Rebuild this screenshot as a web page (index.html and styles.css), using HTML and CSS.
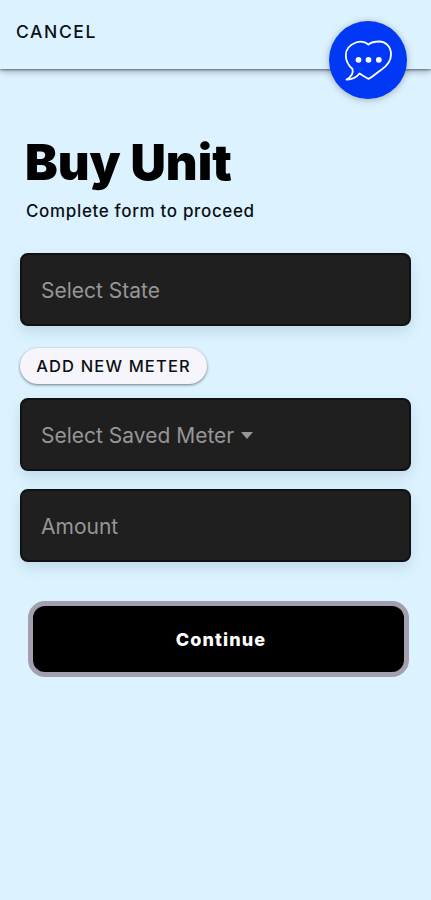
FILE: index.html
```html
<!DOCTYPE html>
<html lang="en">
  <head>
    <meta charset="UTF-8" />
    <meta name="viewport" content="width=device-width, initial-scale=1.0" />
    <title>Buy Unit</title>
    <link rel="stylesheet" href="styles.css">
  </head>
  <body>
    <header class="toolbar">
      <button class="cancel" type="button">CANCEL</button>
    </header>

    <button class="chat" type="button" aria-label="Chat">
      <svg viewBox="0 0 78 78" width="78" height="78">
        <path d="M39.500 23.500 C36 20.500 31 20 27 21.500 C20 24 16.500 29 16.800 35 C17 40 19.500 44.500 23.500 48 C24.500 52 22 56 17.500 58.500 C22 59 27.500 56.500 30.500 52.500 C33.500 54.500 36.500 56.500 39.500 57.800 C43 56.500 47 52.500 52 49 C58 45 62 40 62 33.500 C62 26 57 20.500 50 20.500 C46 20.500 42 21.500 39.500 23.500 Z" fill="none" stroke="#fff" stroke-width="1.8" stroke-linejoin="round" />
        <circle cx="29.500" cy="38.800" r="2.900" fill="#fff" />
        <circle cx="39.500" cy="38.800" r="2.900" fill="#fff" />
        <circle cx="49.800" cy="38.800" r="2.900" fill="#fff" />
      </svg>
    </button>

    <main class="container">
      <h1>Buy Unit</h1>
      <p class="subtitle">Complete form to proceed</p>

      <form>
        <div class="field">Select State</div>
        <button class="add-meter" type="button">ADD NEW METER</button>
        <div class="field">Select Saved Meter <span class="caret"></span></div>
        <div class="field">Amount</div>
        <button class="continue" type="button">Continue</button>
      </form>
    </main>
  </body>
</html>
```
FILE: styles.css
```css
* {
  box-sizing: border-box;
}
body {
  margin: 0;
  min-height: 100vh;
  font-family: Inter, Roboto, sans-serif;
  background-color: #dcf3ff;
  color: #0b1014;
}
button {
  font-family: inherit;
  border: none;
  padding: 0;
  cursor: pointer;
}
.toolbar {
  height: 69px;
  padding: 21px 16px 0;
  box-shadow: 0 1px 2px rgba(0, 0, 0, 0.4), 0 2px 7px rgba(0, 0, 0, 0.35);
}
.cancel {
  display: block;
  background: none;
  color: #0b1014;
  font-size: 17.5px;
  font-weight: 500;
  line-height: 22px;
  letter-spacing: 1.6px;
}
.chat {
  position: absolute;
  top: 21px;
  right: 24px;
  width: 78px;
  height: 78px;
  border-radius: 50%;
  background-color: #0038f5;
  box-shadow: 0 1px 7px rgba(0, 0, 0, 0.3);
}
.chat svg {
  display: block;
}
.container {
  padding: 64px 20px 0;
}
h1 {
  margin: 0 0 0 5px;
  font-size: 49px;
  font-weight: 900;
  line-height: 60px;
  letter-spacing: 0;
  color: #000;
}
.subtitle {
  margin: 7px 0 31px 6px;
  font-size: 17px;
  font-weight: 500;
  line-height: 22px;
  letter-spacing: 0.65px;
}
form {
  display: flex;
  flex-direction: column;
}
.field {
  display: flex;
  align-items: center;
  height: 73px;
  padding: 2px 0 0 19px;
  border: 2px solid #111;
  border-radius: 8px;
  background-color: #1f1f1f;
  color: #969696;
  font-size: 21px;
  box-shadow: 0 6px 14px rgba(60, 90, 120, 0.16);
}
.field + .field {
  margin-top: 18px;
}
.caret {
  margin-left: 7px;
  border: 6.5px solid transparent;
  border-top: 7px solid #969696;
  border-bottom: 0;
}
.add-meter {
  align-self: flex-start;
  width: 187px;
  height: 36px;
  margin: 22px 0 14px;
  padding-bottom: 1px;
  border-radius: 18px;
  background-color: #f5f5fb;
  color: #0b1014;
  font-size: 16.5px;
  font-weight: 500;
  letter-spacing: 1.15px;
  box-shadow: 0 1px 3px rgba(0, 0, 0, 0.5);
}
.continue {
  height: 76px;
  margin: 39px 2px 0 8px;
  padding-left: 5px;
  border: 5px solid #a39fae;
  border-radius: 17px;
  background-color: #000;
  color: #fff;
  font-size: 18px;
  font-weight: 800;
  letter-spacing: 1.1px;
}
```
